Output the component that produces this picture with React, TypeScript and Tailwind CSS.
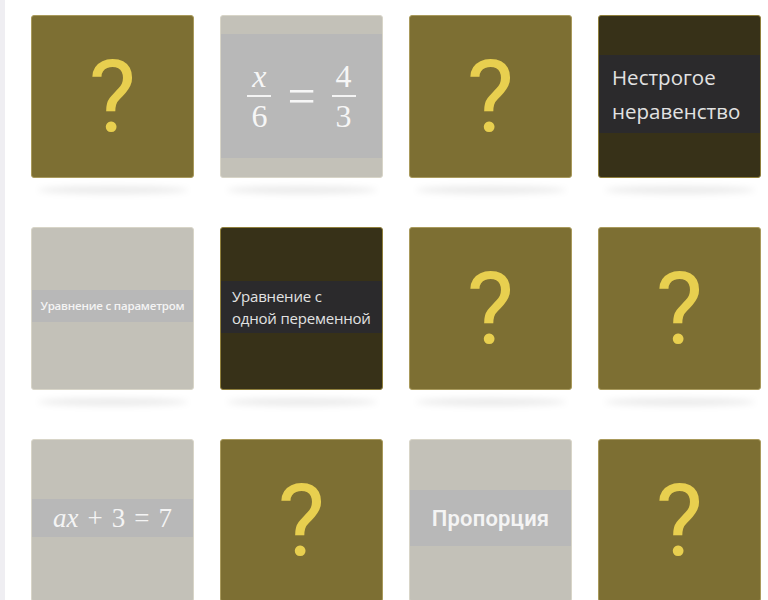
type Kind = "hidden" | "light" | "dark";

type Tile = {
  kind: Kind;
  content?: React.ReactNode;
};

const serif = "font-['Liberation_Serif','DejaVu_Serif',serif]";

function Frac({ top, bottom, italicTop }: { top: string; bottom: string; italicTop?: boolean }) {
  return (
    <span className="inline-flex flex-col items-center">
      <span className={`leading-[30px] ${italicTop ? "italic" : ""}`}>{top}</span>
      <span className="my-[4px] h-[2px] w-[24px] bg-[#f4f4f4]" />
      <span className="leading-[30px]">{bottom}</span>
    </span>
  );
}

const tiles: Tile[] = [
  { kind: "hidden" },
  {
    kind: "light",
    content: (
      <div className="mt-[18px] flex h-[124px] items-center justify-center bg-[#b8b8b8] text-[32px] text-[#f6f6f6]">
        <span className={serif + " flex items-center gap-[16px]"}>
          <Frac top="x" bottom="6" italicTop />
          <span className="text-[50px] leading-none">=</span>
          <Frac top="4" bottom="3" />
        </span>
      </div>
    ),
  },
  { kind: "hidden" },
  {
    kind: "dark",
    content: (
      <div className="mt-[39px] bg-[#2b2a2c] px-[13px] py-[5px] font-['Open_Sans',sans-serif] text-[20.5px] leading-[34px] text-[#e2e2e2]">
        Нестрогое неравенство
      </div>
    ),
  },
  {
    kind: "light",
    content: (
      <div className="mt-[62px] flex h-[32px] items-center justify-center bg-[#b8b8b8] font-['Open_Sans',sans-serif] text-[11.5px] font-semibold tracking-[-0.2px] text-[#f4f4f4]">
        Уравнение с параметром
      </div>
    ),
  },
  {
    kind: "dark",
    content: (
      <div className="mt-[53px] bg-[#2b2a2c] py-[4px] pl-[11px] pr-[4px] font-['Open_Sans',sans-serif] text-[15px] leading-[22px] tracking-[-0.2px] text-[#e2e2e2]">
        Уравнение с
        <br />
        одной переменной
      </div>
    ),
  },
  { kind: "hidden" },
  { kind: "hidden" },
  {
    kind: "light",
    content: (
      <div
        className={`mt-[59px] flex h-[38px] items-center justify-center bg-[#b8b8b8] text-[27px] text-[#f4f4f4] ${serif}`}
      >
        <span className="flex items-center gap-[9px]">
          <i>ax</i>
          <span>+</span>
          <span>3</span>
          <span>=</span>
          <span>7</span>
        </span>
      </div>
    ),
  },
  { kind: "hidden" },
  {
    kind: "light",
    content: (
      <div className="mt-[50px] flex h-[56px] items-center justify-center bg-[#b8b8b8] font-['Roboto',sans-serif] text-[22px] font-semibold tracking-[0.2px] text-[#f4f4f4]">
        Пропорция
      </div>
    ),
  },
  { kind: "hidden" },
];

const cardStyle: Record<Kind, string> = {
  hidden: "bg-[#7d6f33] border-[#a99a5c]",
  light: "bg-[#c3c1b8] border-[#d8d5c8]",
  dark: "bg-[#373118] border-[#8f7f3c]",
};

function Card({ tile }: { tile: Tile }) {
  return (
    <div className="flex flex-col">
      <div className={`h-[163px] w-[163px] overflow-hidden rounded-[3px] border ${cardStyle[tile.kind]}`}>
        {tile.kind === "hidden" ? (
          <div className="flex h-full items-center justify-center font-['Roboto',sans-serif] text-[100px] leading-none text-[#e8cf4f]">
            ?
          </div>
        ) : (
          tile.content
        )}
      </div>
      <div className="mx-auto mt-[8px] h-[8px] w-[150px] rounded-[50%] bg-black/[0.08] blur-[3px]" />
    </div>
  );
}

export default function App() {
  return (
    <div className="flex h-[600px] w-[768px] overflow-hidden bg-white">
      <div className="w-[5px] shrink-0 bg-[#efeef2]" />
      <div className="grid grid-cols-[repeat(4,163px)] content-start gap-x-[26px] gap-y-[33px] pl-[26px] pt-[15px]">
        {tiles.map((t, i) => (
          <Card key={i} tile={t} />
        ))}
      </div>
    </div>
  );
}
